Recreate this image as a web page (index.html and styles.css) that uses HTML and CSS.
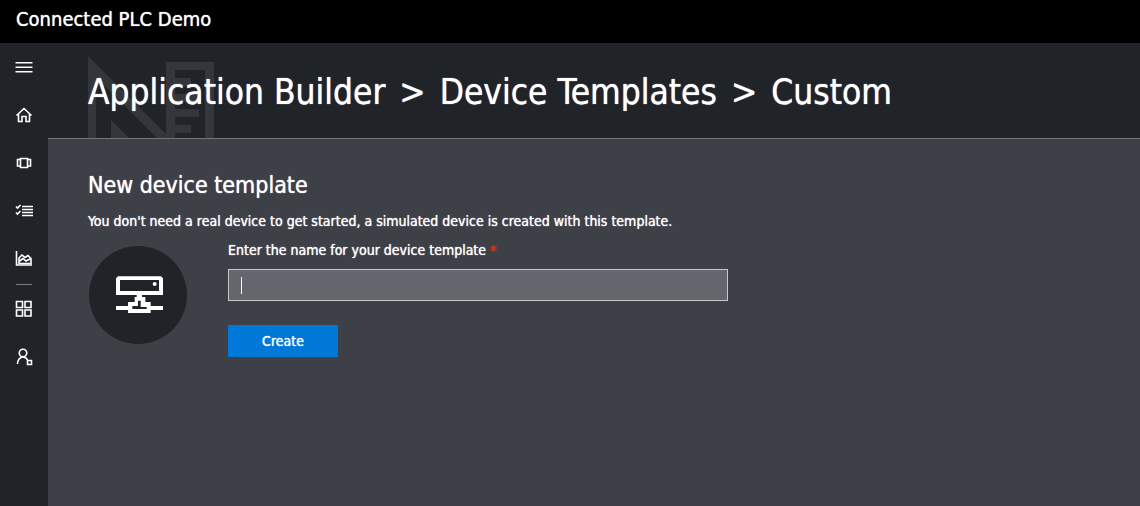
FILE: index.html
```html
<!DOCTYPE html>
<html lang="en">
<head>
<meta charset="utf-8">
<title>Connected PLC Demo</title>
<link rel="stylesheet" href="styles.css">
</head>
<body>
<header class="topbar">Connected PLC Demo</header>
<div class="shell">
  <nav class="rail" aria-label="Main">
    <button class="rail-item" type="button" aria-label="Menu"><svg viewBox="0 0 20 20"><path d="M1.500 5.750h17M1.500 10.250h17M1.500 14.750h17"/></svg></button>
    <a class="rail-item" href="#" aria-label="Home"><svg viewBox="0 0 20 20"><path d="M2.500 10.500L10 3.500l7.500 7M4.500 9v7.500h3.500v-5h4v5h3.500V9"/></svg></a>
    <a class="rail-item" href="#" aria-label="Devices"><svg viewBox="0 0 20 20"><path d="M6.500 5.500h7v9h-7zM6 6.500H3.500v6.500H6M14 6.500h2.500v6.500H14"/></svg></a>
    <a class="rail-item" href="#" aria-label="Rules"><svg viewBox="0 0 20 20"><path d="M8 5.500h11M8 8.500h11M8 11.500h11M8 14.500h11M2 5.500l1.500 1.500L6.500 4M2 11.500l1.500 1.500L6.500 10"/></svg></a>
    <a class="rail-item" href="#" aria-label="Analytics"><svg viewBox="0 0 20 20"><path d="M2.500 2v14H18"/><path d="M5 14.500V9l3-3 3 2.500 3-2 3 3V14.500zM5 12.500l4-3 3 2.500 4-2"/></svg></a>
    <hr class="rail-rule">
    <a class="rail-item" href="#" aria-label="Dashboards"><svg viewBox="0 0 20 20"><path d="M2.500 2.500h6v6h-6zM11 2.500h6v6h-6zM2.500 11h6v6h-6zM11 11h6v6h-6z"/></svg></a>
    <a class="rail-item" href="#" aria-label="Administration"><svg viewBox="0 0 20 20"><circle cx="9" cy="6" r="3.750"/><path d="M3.500 17c0-4 2.500-7 5.500-7 2 0 3.500 1 4.500 3M13.500 13.500h4v4h-4z"/></svg></a>
  </nav>
  <main class="main">
    <div class="banner">
      <svg class="watermark" viewBox="88 56 126 82" aria-hidden="true">
        <path d="M88 56L166 134V62H214V138H205V70H175V78H191V86H175V94H199V102H175V109H199V117H175V125H191V133H175V138H157L96 77V138H88ZM111 120L129 138H111Z"/>
      </svg>
      <h1 class="crumbs"><a href="#">Application Builder</a><span>&gt;</span><a href="#">Device Templates</a><span>&gt;</span><span>Custom</span></h1>
    </div>
    <section class="content">
      <h2 class="heading">New device template</h2>
      <p class="intro">You don't need a real device to get started, a simulated device is created with this template.</p>
      <form class="form">
        <div class="device">
          <svg viewBox="-6 6 180 150" aria-hidden="true">
            <path fill-rule="evenodd" d="M24 25H153L159 31V81H96V87H106V102H122V114H159V126H122V135H54V126H18V114H54V102H74V87H80V81H18V31ZM30 36V69H147V36ZM84 98V114H67V123H110V117H92V98Z"/>
            <circle cx="134" cy="48" r="6"/>
          </svg>
        </div>
        <div class="fields">
          <label class="label" for="name">Enter the name for your device template <span class="required">*</span></label>
          <div class="name-box"><input class="name" id="name" type="text" required></div>
          <button class="create" type="button">Create</button>
        </div>
      </form>
    </section>
  </main>
</div>
</body>
</html>
```
FILE: styles.css
```css
* { box-sizing: border-box; }

body {
  display: flex;
  flex-direction: column;
  min-height: 100vh;
  margin: 0;
  background: #3e4047;
  color: #fff;
  font: 14px/20px "DejaVu Sans Condensed", Tahoma, "Noto Sans", sans-serif;
  text-shadow: 0 0 1px currentColor;
}

.topbar {
  padding: 6px 16px 10px;
  background: #000;
  font-size: 20px;
  line-height: 27px;
}

.shell { display: flex; flex: 1; }

.rail {
  display: flex;
  flex-direction: column;
  width: 48px;
  background: #202328;
}

.rail-item {
  display: grid;
  place-items: center;
  height: 48px;
  padding: 0;
  border: 0;
  background: none;
  color: #fff;
}

.rail-item svg {
  width: 20px;
  height: 20px;
  fill: none;
  stroke: currentColor;
  stroke-width: 1.6;
}

.rail-rule {
  width: 16px;
  margin: 1px auto 0;
  border: 0;
  border-top: 1px solid #7c7c7c;
}

.main { flex: 1; min-width: 0; }

.banner {
  position: relative;
  border-bottom: 1px solid #747474;
  background: #202328;
}

.watermark {
  position: absolute;
  left: 40px;
  bottom: 0;
  width: 126px;
  height: 82px;
  fill: #33363b;
}

.crumbs {
  position: relative;
  display: flex;
  flex-wrap: wrap;
  column-gap: 14px;
  margin: 0;
  padding: 25px 40px 22px;
  font-size: 35px;
  font-weight: 400;
  line-height: 48px;
}

.crumbs a { color: inherit; text-decoration: none; }

.content { padding: 30px 40px; }

.heading {
  margin: 0 0 10px;
  font-size: 23px;
  font-weight: 400;
  line-height: 32px;
}

.intro { margin: 0 0 9px; }

.form { display: flex; gap: 40px; }

.device {
  display: grid;
  flex: none;
  place-items: center;
  width: 98px;
  height: 98px;
  margin: 6px 1px 0;
  border-radius: 50%;
  background: #202328;
}

.device svg { width: 60px; height: 50px; fill: #fff; }

.fields { flex: 1; max-width: 500px; }

.label { display: block; margin-bottom: 9px; }

.required { color: #e03000; font-weight: 700; }

.name-box { position: relative; margin-bottom: 24px; }

.name-box::after {
  content: "";
  position: absolute;
  top: 8px;
  left: 13px;
  width: 1px;
  height: 17px;
  background: #fff;
}

.name-box:focus-within::after { display: none; }

.name {
  display: block;
  width: 100%;
  height: 32px;
  padding: 0 12px;
  border: 1px solid #c8c8c8;
  background: #64666d;
  color: #fff;
  font: inherit;
}

.create {
  display: block;
  width: 110px;
  height: 32px;
  padding: 0;
  border: 0;
  background: #0078d7;
  color: #fff;
  font: inherit;
  text-shadow: inherit;
}
```
